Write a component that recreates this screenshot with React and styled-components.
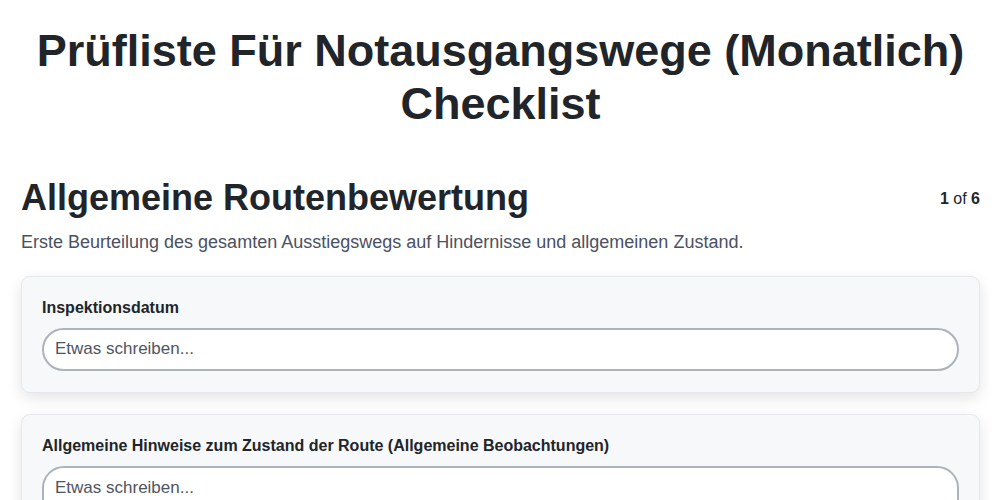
import styled, { createGlobalStyle } from "styled-components";

const GlobalStyle = createGlobalStyle`
  body {
    margin: 0;
    background: #ffffff;
    font-family: "Liberation Sans", Arial, sans-serif;
    color: #212529;
  }
`;

const Page = styled.div`
  padding: 0 20px 20px 21px;
`;

const Title = styled.h1`
  margin: 24px 0 46px;
  font-size: 45px;
  line-height: 53px;
  font-weight: 700;
  text-align: center;
`;

const SectionHeader = styled.div`
  display: flex;
  justify-content: space-between;
  align-items: flex-start;
`;

const SectionTitle = styled.h2`
  margin: 0;
  font-size: 36px;
  line-height: 1.2;
  font-weight: 700;
`;

const Progress = styled.div`
  font-size: 16px;
  line-height: 1.2;
  padding-top: 13px;
  b {
    font-weight: 700;
  }
`;

const Description = styled.p`
  margin: 12px 0 21px;
  font-size: 18px;
  line-height: 1.3;
  color: #4a5162;
`;

const Card = styled.div`
  background: #f7f8fa;
  border: 1px solid #e6e8ec;
  border-radius: 9px;
  padding: 21px 20px;
  margin-bottom: 21px;
  box-shadow: 0 5px 15px rgba(0, 0, 0, 0.11);
`;

const Label = styled.label`
  display: block;
  font-size: 16px;
  line-height: 1.2;
  font-weight: 700;
  margin-bottom: 11px;
`;

const Input = styled.input`
  box-sizing: border-box;
  display: block;
  width: 100%;
  height: 43px;
  padding: 0 11px;
  border: 2px solid #adb3ba;
  border-radius: 22px;
  background: #ffffff;
  font-family: inherit;
  font-size: 17px;
  color: #212529;
  outline: none;
  &::placeholder {
    color: #4f5560;
  }
`;

const TextArea = styled.textarea`
  box-sizing: border-box;
  display: block;
  width: 100%;
  height: 90px;
  padding: 10px 11px;
  border: 2px solid #adb3ba;
  border-radius: 22px;
  background: #ffffff;
  font-family: inherit;
  font-size: 17px;
  line-height: 1.2;
  resize: none;
  outline: none;
  &::placeholder {
    color: #4f5560;
  }
`;

export default function App() {
  return (
    <>
      <GlobalStyle />
      <Page>
        <Title>Prüfliste Für Notausgangswege (Monatlich) Checklist</Title>
        <SectionHeader>
          <SectionTitle>Allgemeine Routenbewertung</SectionTitle>
          <Progress>
            <b>1</b> of <b>6</b>
          </Progress>
        </SectionHeader>
        <Description>
          Erste Beurteilung des gesamten Ausstiegswegs auf Hindernisse und
          allgemeinen Zustand.
        </Description>
        <Card>
          <Label>Inspektionsdatum</Label>
          <Input placeholder="Etwas schreiben..." />
        </Card>
        <Card>
          <Label>
            Allgemeine Hinweise zum Zustand der Route (Allgemeine
            Beobachtungen)
          </Label>
          <TextArea placeholder="Etwas schreiben..." />
        </Card>
      </Page>
    </>
  );
}
